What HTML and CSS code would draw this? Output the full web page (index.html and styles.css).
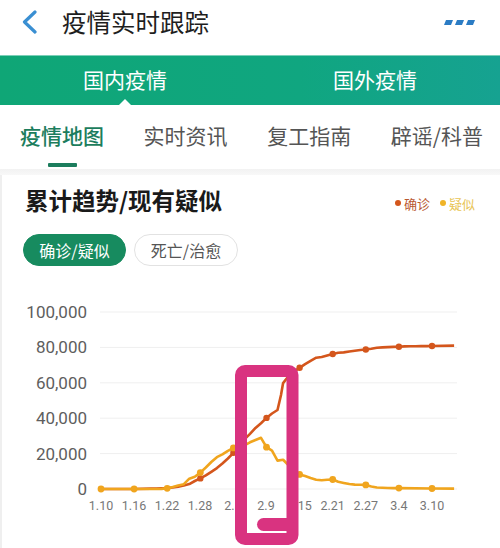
FILE: index.html
```html
<!DOCTYPE html>
<html lang="zh-CN">
<head>
<meta charset="utf-8">
<title>疫情实时跟踪</title>
<link rel="stylesheet" href="styles.css">
</head>
<body>
<div class="page">
  <header class="header">
    <svg class="back" width="18" height="24" viewBox="0 0 18 24">
      <polyline points="14,2 3.5,12 14,22" fill="none" stroke="#3a8fd2" stroke-width="3.2" stroke-linecap="round" stroke-linejoin="round"/>
    </svg>
    <h1 class="title">疫情实时跟踪</h1>
    <svg class="more" width="32" height="8" viewBox="0 0 32 8">
      <polygon points="2,1 9,1 7,6 0,6" fill="#2b7cc4"/>
      <polygon points="13,1 20,1 18,6 11,6" fill="#2b7cc4"/>
      <polygon points="24,1 31,1 29,6 22,6" fill="#2b7cc4"/>
    </svg>
  </header>

  <nav class="region-tabs">
    <div class="region-tab active">国内疫情<span class="notch"></span></div>
    <div class="region-tab">国外疫情</div>
  </nav>

  <nav class="sub-tabs">
    <div class="sub-tab active">疫情地图<span class="bar"></span></div>
    <div class="sub-tab">实时资讯</div>
    <div class="sub-tab">复工指南</div>
    <div class="sub-tab">辟谣/科普</div>
  </nav>

  <div class="separator"></div>

  <section class="card">
    <div class="card-head">
      <h2 class="card-title">累计趋势/现有疑似</h2>
      <div class="legend">
        <span class="dot dot-confirmed"></span><span class="lg-confirmed">确诊</span>
        <span class="dot dot-suspect"></span><span class="lg-suspect">疑似</span>
      </div>
    </div>
    <div class="toggles">
      <button class="pill pill-on">确诊/疑似</button>
      <button class="pill">死亡/治愈</button>
    </div>

    <svg class="chart" width="500" height="282" viewBox="0 266 500 282">
      <g class="grid" stroke="#efefef" stroke-width="1">
        <line x1="100" y1="312" x2="457" y2="312"/>
        <line x1="100" y1="347.4" x2="457" y2="347.4"/>
        <line x1="100" y1="382.8" x2="457" y2="382.8"/>
        <line x1="100" y1="418.2" x2="457" y2="418.2"/>
        <line x1="100" y1="453.6" x2="457" y2="453.6"/>
        <line x1="100" y1="489" x2="457" y2="489"/>
      </g>
      <g class="ylabels" text-anchor="end">
        <text x="87" y="318">100,000</text>
        <text x="87" y="353.4">80,000</text>
        <text x="87" y="388.8">60,000</text>
        <text x="87" y="424.2">40,000</text>
        <text x="87" y="459.6">20,000</text>
        <text x="87" y="495">0</text>
      </g>
      <g class="xlabels" text-anchor="middle">
        <text x="101" y="510">1.10</text>
        <text x="134" y="510">1.16</text>
        <text x="167" y="510">1.22</text>
        <text x="200" y="510">1.28</text>
        <text x="233" y="510">2.3</text>
        <text x="266" y="510">2.9</text>
        <text x="299.6" y="510">2.15</text>
        <text x="332.7" y="510">2.21</text>
        <text x="365.8" y="510">2.27</text>
        <text x="398.9" y="510">3.4</text>
        <text x="432" y="510">3.10</text>
      </g>
      <polyline fill="none" stroke="#d4561c" stroke-width="2.6" stroke-linejoin="round" points="101,489 134.1,489 150.7,488.6 156.2,488.5 161.7,488.2 167.2,488 172.7,487.5 178.2,486.7 183.8,485.5 189.3,484.1 194.8,481 200.3,478.4 205.8,475.4 211.3,471.8 216.9,468.1 222.4,463.5 227.9,458.5 233.4,452.8 238.9,445.9 244.4,439.4 250,433.8 255.5,427.9 261,423.2 266.5,417.9 272,413.5 277.5,410 281,395 283.1,383.1 288.6,376 294.1,371.3 299.6,367.8 305.1,364.1 310.6,360.8 316.2,357.7 321.7,357 327.2,355.4 332.7,354 338.2,352.8 343.7,352.4 349.3,351.5 354.8,350.8 360.3,350 365.8,349.5 371.3,348.7 376.9,347.7 382.4,347.4 387.9,347.1 393.4,346.9 398.9,346.7 404.4,346.4 410,346.2 415.5,346.2 421,346.1 426.5,346.1 432,346 454.1,345.6"/>
      <polyline fill="none" stroke="#f0a51e" stroke-width="2.6" stroke-linejoin="round" points="101,489 134.1,489 161.7,488.9 167.2,488.3 172.7,487.1 178.2,485.5 183.8,484.2 189.3,478.7 194.8,476.7 200.3,472.6 205.8,467.5 211.3,462 216.9,457.2 222.4,454.4 227.9,450.8 233.4,447.9 238.9,447.8 244.4,445.3 250,442.3 255.5,440 261,437.8 266.5,447.2 272,450.6 277.5,460.6 283.1,459.8 288.6,465.2 294.1,471.1 299.6,474.4 305.1,476.1 310.6,478 316.2,479.7 321.7,480.3 327.2,479.8 332.7,479.5 338.2,481.7 343.7,482.9 349.3,484 354.8,484.6 360.3,484.8 365.8,484.9 371.3,486.5 376.9,487.5 382.4,487.7 387.9,488 393.4,488.1 398.9,488.1 432,488.5 454.1,488.6"/>
      <g fill="#d4561c">
        <circle cx="200.3" cy="478.4" r="3.2"/>
        <circle cx="233.4" cy="452.8" r="3.2"/>
        <circle cx="266.5" cy="417.9" r="3.2"/>
        <circle cx="299.6" cy="367.8" r="3.2"/>
        <circle cx="332.7" cy="354" r="3.2"/>
        <circle cx="365.8" cy="349.5" r="3.2"/>
        <circle cx="398.9" cy="346.7" r="3.2"/>
        <circle cx="432" cy="346" r="3.2"/>
      </g>
      <g fill="#f0a51e">
        <circle cx="101" cy="489" r="3.4"/>
        <circle cx="134.1" cy="489" r="3.4"/>
        <circle cx="167.2" cy="488.3" r="3.4"/>
        <circle cx="200.3" cy="472.6" r="3.4"/>
        <circle cx="233.4" cy="447.9" r="3.4"/>
        <circle cx="266.5" cy="447.2" r="3.4"/>
        <circle cx="299.6" cy="474.4" r="3.4"/>
        <circle cx="332.7" cy="479.5" r="3.4"/>
        <circle cx="365.8" cy="484.9" r="3.4"/>
        <circle cx="398.9" cy="488.1" r="3.4"/>
        <circle cx="432" cy="488.5" r="3.4"/>
      </g>
      <g class="mark">
        <rect x="241" y="371" width="51.5" height="168" rx="4" fill="none" stroke="#d93380" stroke-width="12"/>
        <rect x="257" y="518" width="37" height="13" rx="6.5" fill="#d93380"/>
      </g>
    </svg>
  </section>
</div>
</body>
</html>
```

FILE: styles.css
```css
* { box-sizing: border-box; }

html, body {
  margin: 0;
  padding: 0;
  background: #ffffff;
}

body {
  font-family: "Noto Sans CJK SC", "Noto Sans", sans-serif;
  color: #222;
}

.page {
  width: 500px;
  height: 548px;
  overflow: hidden;
}

.header {
  height: 55px;
  display: flex;
  align-items: center;
  padding-left: 21px;
  padding-right: 24px;
  padding-bottom: 11px;
}

.back {
  display: block;
  flex: none;
}

.title {
  margin: 0 0 0 23px;
  font-size: 24.5px;
  font-weight: 400;
  line-height: 30px;
  color: #1e1e1e;
  flex: 1;
}

.more {
  display: block;
  flex: none;
  margin-top: 2px;
}

.region-tabs {
  height: 50px;
  display: flex;
  background: linear-gradient(90deg, #0fa676 0%, #10a680 60%, #16a291 100%);
  box-shadow: inset 0 1px 0 #7ccfb8;
}

.region-tab {
  flex: 1;
  position: relative;
  display: flex;
  align-items: center;
  justify-content: center;
  color: #ffffff;
  font-size: 21px;
  padding-bottom: 3px;
}

.notch {
  position: absolute;
  left: 50%;
  bottom: 0;
  margin-left: -6px;
  width: 0;
  height: 0;
  border-left: 6px solid transparent;
  border-right: 6px solid transparent;
  border-bottom: 6px solid #ffffff;
}

.sub-tabs {
  height: 64px;
  display: flex;
  justify-content: space-between;
  padding: 0 17px 0 20px;
}

.sub-tab {
  position: relative;
  font-size: 21px;
  line-height: 30px;
  padding-top: 15px;
  color: #555;
  display: flex;
  flex-direction: column;
  align-items: center;
}

.sub-tab.active {
  color: #1c7d5d;
  font-weight: 500;
}

.bar {
  display: block;
  width: 29px;
  height: 4px;
  margin-top: 13px;
  background: #1c7d5d;
  border-radius: 1px;
}

.separator {
  height: 6px;
  background: linear-gradient(#f2f2f2, #f8f8f8);
}

.card {
  box-shadow: inset 2px 0 0 #efefef;
  padding-top: 9px;
}

.card-head {
  display: flex;
  align-items: center;
  justify-content: space-between;
  padding: 0 25px 0 25px;
  height: 32px;
}

.card-title {
  margin: 0;
  font-size: 23.5px;
  font-weight: 700;
  line-height: 32px;
  color: #1a1a1a;
}

.legend {
  display: flex;
  align-items: center;
  font-size: 13px;
  margin-top: 6px;
}

.dot {
  width: 6px;
  height: 6px;
  border-radius: 50%;
  margin-right: 3px;
}

.dot-confirmed { background: #d4561c; }
.dot-suspect { background: #f0b428; margin-left: 10px; }

.lg-confirmed { color: #b9582f; }
.lg-suspect { color: #e8c454; }

.toggles {
  display: flex;
  gap: 8px;
  padding-left: 23px;
  margin-top: 18px;
}

.pill {
  height: 32px;
  width: 104px;
  border-radius: 16px;
  border: 1.5px solid #e2e2e2;
  background: #fff;
  color: #555;
  font-family: "Noto Sans CJK SC", "Noto Sans", sans-serif;
  font-size: 16px;
  padding: 0;
  line-height: 29px;
}

.pill-on {
  background: #178b5f;
  border-color: #178b5f;
  color: #ffffff;
  width: 103px;
}

.chart {
  display: block;
}

.ylabels text {
  font-family: Roboto, "Noto Sans", sans-serif;
  font-size: 17px;
  fill: #5e5e5e;
}

.xlabels text {
  font-family: Roboto, "Noto Sans", sans-serif;
  font-size: 12.5px;
  fill: #777;
}
```
